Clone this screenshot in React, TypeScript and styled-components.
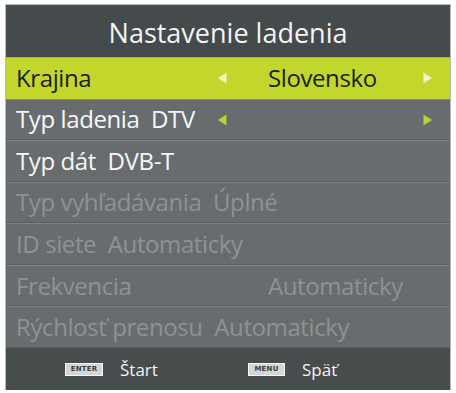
import React from "react";
import styled, { createGlobalStyle } from "styled-components";

const Global = createGlobalStyle`
  html, body { margin: 0; padding: 0; background: #ffffff; }
  body { font-family: "Open Sans", "Noto Sans", sans-serif; }
`;

const Panel = styled.div`
  margin: 5px 0 0 6px;
  width: 444px;
  height: 385px;
  display: grid;
  grid-template-rows: 52px repeat(7, 1fr) 42px;
  background: #686c6e;
  box-shadow: 0 0 0 1px #b9bcbd;
`;

const Header = styled.div`
  background: #454a4c;
  color: #f4f4f4;
  font-size: 27px;
  display: flex;
  align-items: center;
  justify-content: center;
  padding-top: 3px;
`;

const Row = styled.div<{ $active?: boolean; $disabled?: boolean }>`
  display: grid;
  grid-template-columns: 198px 50px 1fr 30px;
  align-items: center;
  padding-left: 10px;
  font-size: 24px;
  letter-spacing: -0.4px;
  white-space: pre;
  background: ${(p) => (p.$active ? "#c2d62c" : "#686c6e")};
  color: ${(p) => (p.$active ? "#1c1f14" : p.$disabled ? "#8e9294" : "#f7f7f7")};
  border-top: 1px solid ${(p) => (p.$active ? "#a9bb2a" : "#7e8284")};
  box-shadow: ${(p) => (p.$active ? "none" : "inset 0 -1px 0 #5a5e60")};
`;

const Label = styled.span<{ $span?: boolean }>`
  grid-column: ${(p) => (p.$span ? "1 / 5" : "1 / 2")};
  padding-bottom: 2px;
`;

const Value = styled.span`
  grid-column: 3 / 4;
  padding-left: 4px;
  padding-bottom: 2px;
`;

const ArrowCell = styled.span<{ $col: number }>`
  grid-column: ${(p) => p.$col} / ${(p) => p.$col + 1};
  display: flex;
  align-items: center;
  padding-left: 2px;
`;

const Footer = styled.div`
  background: #474c4d;
  display: flex;
  align-items: center;
  padding-left: 59px;
  color: #f4f4f4;
  font-size: 17px;
  padding-top: 1px;
`;

const FooterItem = styled.div<{ $width: number }>`
  display: flex;
  align-items: center;
  gap: 17px;
  width: ${(p) => p.$width}px;
`;

const Key = styled.span<{ $w: number }>`
  display: inline-flex;
  align-items: center;
  justify-content: center;
  width: ${(p) => p.$w}px;
  height: 11px;
  background: #d4d6d6;
  border: 1px solid #f6f6f6;
  color: #3a3e3f;
  font-size: 7px;
  font-weight: 700;
  letter-spacing: 0.2px;
  font-family: "DejaVu Sans", sans-serif;
  line-height: 1;
`;

const ArrowSvg = styled.svg`
  display: block;
  width: 12px;
  height: 14px;
`;

const Arrow: React.FC<{ dir: "l" | "r"; color: string }> = ({ dir, color }) => (
  <ArrowSvg viewBox="0 0 12 14">
    {dir === "l" ? (
      <polygon points="10.5,1.5 10.5,12.5 2,7" fill={color} />
    ) : (
      <polygon points="1.5,1.5 1.5,12.5 10,7" fill={color} />
    )}
  </ArrowSvg>
);

export default function App() {
  return (
    <>
      <Global />
      <Panel>
        <Header>Nastavenie ladenia</Header>
        <Row $active>
          <Label>Krajina</Label>
          <ArrowCell $col={2}>
            <Arrow dir="l" color="#eef3c8" />
          </ArrowCell>
          <Value>Slovensko</Value>
          <ArrowCell $col={4}>
            <Arrow dir="r" color="#eef3c8" />
          </ArrowCell>
        </Row>
        <Row>
          <Label>{"Typ ladenia  DTV"}</Label>
          <ArrowCell $col={2}>
            <Arrow dir="l" color="#b8d234" />
          </ArrowCell>
          <ArrowCell $col={4}>
            <Arrow dir="r" color="#b8d234" />
          </ArrowCell>
        </Row>
        <Row>
          <Label $span>{"Typ dát  DVB-T"}</Label>
        </Row>
        <Row $disabled>
          <Label $span>{"Typ vyhľadávania  Úplné"}</Label>
        </Row>
        <Row $disabled>
          <Label $span>{"ID siete  Automaticky"}</Label>
        </Row>
        <Row $disabled>
          <Label>Frekvencia</Label>
          <Value>Automaticky</Value>
        </Row>
        <Row $disabled>
          <Label $span>{"Rýchlosť prenosu  Automaticky"}</Label>
        </Row>
        <Footer>
          <FooterItem $width={183}>
            <Key $w={36}>ENTER</Key>
            <span>Štart</span>
          </FooterItem>
          <FooterItem $width={120}>
            <Key $w={35}>MENU</Key>
            <span>Späť</span>
          </FooterItem>
        </Footer>
      </Panel>
    </>
  );
}
